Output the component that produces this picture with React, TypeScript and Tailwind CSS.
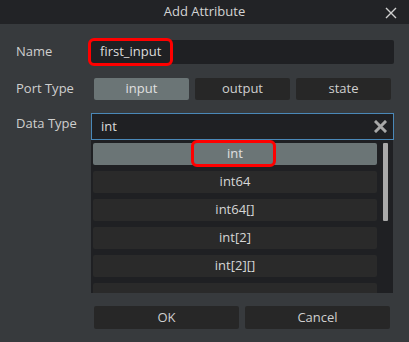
import React from "react";

const font = { fontFamily: '"Open Sans", "Noto Sans", sans-serif' };

export default function App() {
  const items = ["int", "int64", "int64[]", "int[2]", "int[2][]", ""];
  return (
    <div className="w-[409px] h-[342px] bg-[#373a3d] flex flex-col text-[13px] text-[#cfcfcf] overflow-hidden" style={font}>
      <div className="relative h-[24px] bg-[#222326] flex items-center justify-center shrink-0">
        <span className="text-[#d4d4d4] text-[13px]">Add Attribute</span>
        <svg className="absolute right-[12px] top-[7px]" width="12" height="12" viewBox="0 0 12 12">
          <path d="M1 1 L11 11 M11 1 L1 11" stroke="#d0d0d0" strokeWidth="1.4" />
        </svg>
      </div>
      <div className="flex flex-col pt-[16px] pl-[16px] pr-[15px]">
        <div className="flex items-center h-[24px]">
          <div className="w-[75px]">Name</div>
          <div className="relative flex-1 h-[24px] bg-[#1f2023] rounded-[2px] flex items-center pl-[9px] text-[#dcdcdc]">
            first_input
            <div className="absolute left-[-3px] top-[-2px] w-[85px] h-[28px] border-[3px] border-[#ff0000] rounded-[6px]" />
          </div>
        </div>
        <div className="flex items-center h-[22px] mt-[14px]">
          <div className="w-[78px]">Port Type</div>
          <div className="flex gap-[6px]">
            <div className="w-[95px] h-[22px] bg-[#6b7576] rounded-[2px] flex items-center justify-center text-[#e0e0e0]">input</div>
            <div className="w-[95px] h-[22px] bg-[#272727] rounded-[2px] flex items-center justify-center">output</div>
            <div className="w-[95px] h-[22px] bg-[#272727] rounded-[2px] flex items-center justify-center">state</div>
          </div>
        </div>
        <div className="flex mt-[13px]">
          <div className="w-[75px] pt-[1px]">Data Type</div>
          <div className="flex flex-col w-[303px]">
            <div className="h-[27px] border border-[#4a88b8] bg-[#1f2023] flex items-center pl-[9px] pr-[6px] justify-between text-[#dcdcdc]">
              <span>int</span>
              <svg width="13" height="13" viewBox="0 0 13 13">
                <path d="M2 2 L11 11 M11 2 L2 11" stroke="#a8a8a8" strokeWidth="3" strokeLinecap="square" />
              </svg>
            </div>
            <div className="relative h-[153px] w-[302px] bg-[#1f2023] overflow-hidden flex">
              <div className="flex flex-col gap-[6px] pt-[3px] pl-[2px] w-[286px]">
                {items.map((it, i) => (
                  <div
                    key={i}
                    className={
                      "relative shrink-0 h-[22px] w-[284px] rounded-[2px] flex items-center justify-center " +
                      (i === 0 ? "bg-[#6b7576] text-[#e0e0e0]" : "bg-[#2a2a2a] text-[#d6d6d6]")
                    }
                  >
                    {it}
                    {i === 0 && (
                      <div className="absolute left-[98px] top-[-3px] w-[85px] h-[27px] border-[3px] border-[#ff0000] rounded-[6px]" />
                    )}
                  </div>
                ))}
              </div>
              <div className="ml-[6px] pt-[3px] w-[6px]">
                <div className="w-[5px] h-[78px] bg-[#a9a9a9] rounded-[1px]" />
              </div>
            </div>
          </div>
        </div>
        <div className="flex gap-[6px] pl-[78px] mt-[13px]">
          <div className="w-[145px] h-[23px] bg-[#272727] rounded-[2px] flex items-center justify-center">OK</div>
          <div className="w-[145px] h-[23px] bg-[#272727] rounded-[2px] flex items-center justify-center">Cancel</div>
        </div>
      </div>
    </div>
  );
}
